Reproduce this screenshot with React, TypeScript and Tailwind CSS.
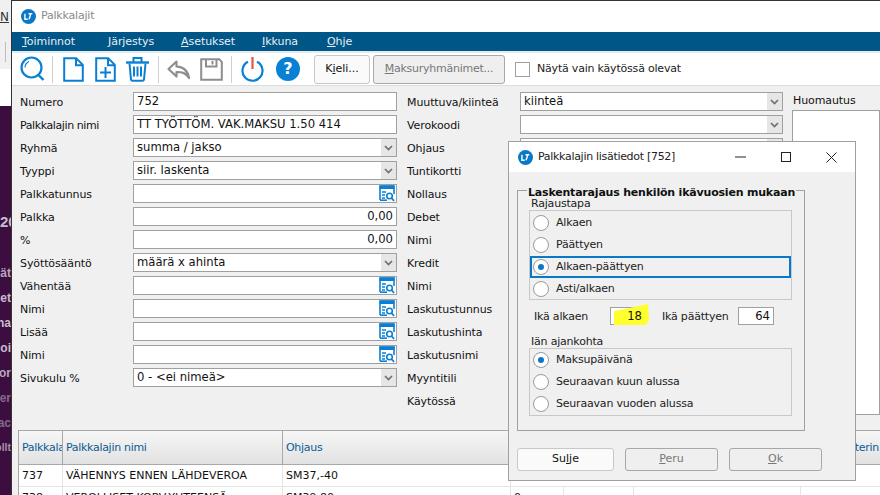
import React from "react";

const font = { fontFamily: '"DejaVu Sans", sans-serif' };

function Logo({ size = 15 }: { size?: number }) {
  return (
    <svg width={size} height={size} viewBox="0 0 16 16" className="shrink-0">
      <circle cx="8" cy="8" r="8" fill="#0a78c8" />
      <path d="M4.2 5v6h3M8 5h4M10 5v1.5L8.6 11" stroke="#fff" strokeWidth="1.5" fill="none" />
    </svg>
  );
}

function Lookup() {
  return (
    <svg width="16" height="17" viewBox="0 0 16 17" className="shrink-0">
      <path d="M1 15V1h14v8" fill="#fff" stroke="#0a80d4" strokeWidth="1.6" />
      <path d="M1 15.2h7" stroke="#0a80d4" strokeWidth="1.6" />
      <rect x="0.5" y="0.5" width="15" height="3.5" fill="#0a80d4" />
      <path d="M3 7h4M3 10h3M3 13h3" stroke="#0a80d4" strokeWidth="1.4" />
      <circle cx="10.5" cy="11" r="2.8" fill="none" stroke="#0a80d4" strokeWidth="1.6" />
      <path d="M12.5 13l2.6 3" stroke="#0a80d4" strokeWidth="1.8" />
    </svg>
  );
}

function Chevron() {
  return (
    <span className="flex h-full w-[15px] shrink-0 items-center justify-center bg-[#e6e6e6]">
      <svg width="9" height="6" viewBox="0 0 9 6">
        <path d="M1 1l3.5 3.5L8 1" fill="none" stroke="#707070" strokeWidth="1.7" />
      </svg>
    </span>
  );
}

type Kind = "text" | "select" | "lookup" | "num";

function Field({ label, value = "", kind = "text", tight = false }: { label: string; value?: string; kind?: Kind; tight?: boolean }) {
  return (
    <div className="mb-[4px] flex h-[19px] items-center">
      <span className={`w-[113px] shrink-0 whitespace-nowrap pt-[3px] text-[11px] text-[#111] ${tight ? "tracking-[-0.4px]" : "tracking-[-0.1px]"}`}>
        {label}
      </span>
      <div className="flex h-[19px] flex-1 items-center border border-[#a0a0a0] bg-white">
        <span className={`flex-1 whitespace-nowrap px-[3px] pt-[1px] text-[11.6px] text-[#111] ${kind === "num" ? "text-right" : ""}`}>{value}</span>
        {kind === "select" && <Chevron />}
        {kind === "lookup" && (
          <span className="mr-[1px]">
            <Lookup />
          </span>
        )}
      </div>
    </div>
  );
}

function PlainLabel({ label }: { label: string }) {
  return (
    <div className="mb-[4px] flex h-[19px] items-center whitespace-nowrap pt-[3px] text-[11px] tracking-[-0.1px] text-[#111]">{label}</div>
  );
}

function Radio({ label, on = false, focus = false }: { label: string; on?: boolean; focus?: boolean }) {
  return (
    <div className={`flex h-[22px] items-center pl-[1px] ${focus ? "border-2 border-[#0a78c8]" : "border-2 border-transparent"}`}>
      <span className="flex h-[16px] w-[16px] shrink-0 items-center justify-center rounded-full border border-[#9a9a9a] bg-white">
        {on && <span className="h-[6px] w-[6px] rounded-full bg-[#0a78c8]" />}
      </span>
      <span className="ml-[7px] whitespace-nowrap pt-[1px] text-[11px] tracking-[-0.2px] text-[#222]">{label}</span>
    </div>
  );
}

function Sep() {
  return <span className="block h-[27px] w-[1px] shrink-0 bg-[#cfcfcf]" />;
}

function Toolbar() {
  const blue = "#0a80d4";
  const gray = "#8e8e8e";
  return (
    <div className="flex h-[33px] shrink-0 items-center border-b border-[#dcdcdc] bg-white pl-[8px]">
      <svg width="25" height="27" viewBox="0 0 25 27" className="shrink-0">
        <circle cx="11.5" cy="11.5" r="10" fill="none" stroke={blue} strokeWidth="2.2" />
        <path d="M5 11.5a7 7 0 0 1 4-6" fill="none" stroke={blue} strokeWidth="1.2" />
        <path d="M18.5 19l5 5" stroke={blue} strokeWidth="2.4" />
      </svg>
      <span className="ml-[7px]"><Sep /></span>
      <svg width="21" height="25" viewBox="0 0 21 25" className="ml-[10px] shrink-0">
        <path d="M1.2 1.2h12l6.6 6.6v16H1.2zM13 1.2v7h6.8" fill="none" stroke={blue} strokeWidth="2" />
      </svg>
      <svg width="21" height="25" viewBox="0 0 21 25" className="ml-[11px] shrink-0">
        <path d="M1.2 1.2h12l6.6 6.6v16H1.2zM13 1.2v7h6.8" fill="none" stroke={blue} strokeWidth="2" />
        <path d="M10.5 10v11M5 15.5h11" stroke={blue} strokeWidth="2" />
      </svg>
      <svg width="25" height="26" viewBox="0 0 25 26" className="ml-[9px] shrink-0">
        <path d="M1 6.5h23" stroke={blue} strokeWidth="2.4" />
        <path d="M8.5 6V2h8v4" fill="none" stroke={blue} strokeWidth="2" />
        <path d="M4.5 7.5l1.5 16a1.5 1.5 0 0 0 1.5 1.2h10a1.5 1.5 0 0 0 1.5-1.2l1.5-16" fill="none" stroke={blue} strokeWidth="2" />
        <path d="M9 10.5v10M12.5 10.5v10M16 10.5v10" stroke={blue} strokeWidth="2" />
      </svg>
      <span className="ml-[8px]"><Sep /></span>
      <svg width="25" height="21" viewBox="0 0 25 21" className="ml-[7px] shrink-0">
        <path d="M10.5 2.5L2.5 10l8 7.5V13c6 0 9.5 1 12.5 6-1-7-5-11-12.5-11.5z" fill="none" stroke={gray} strokeWidth="2.2" strokeLinejoin="round" />
      </svg>
      <svg width="23" height="23" viewBox="0 0 23 23" className="ml-[9px] shrink-0">
        <path d="M1.2 1.2h18l2.6 2.6v18H1.2z" fill="none" stroke={gray} strokeWidth="2" />
        <path d="M6 1.5v7h10.5v-7M12.5 3v3.5" fill="none" stroke={gray} strokeWidth="2" />
      </svg>
      <span className="ml-[8px]"><Sep /></span>
      <svg width="23" height="25" viewBox="0 0 23 25" className="ml-[9px] shrink-0">
        <path d="M7 4.8a10 10 0 1 0 9 0" fill="none" stroke={blue} strokeWidth="2.2" />
        <path d="M11.5 0v12" stroke="#e2574c" strokeWidth="2.2" />
      </svg>
      <span className="ml-[12px] flex h-[24px] w-[24px] shrink-0 items-center justify-center rounded-full bg-[#0a80d4] text-[16px] font-bold text-white">?</span>
      <button className="ml-[14px] flex h-[29px] w-[56px] shrink-0 items-center justify-center rounded-[3px] border border-[#c8c8c8] bg-[#fafafa] text-[11px] text-[#111]">
        <span>K<u>i</u>eli...</span>
      </button>
      <button className="ml-[3px] flex h-[29px] w-[132px] shrink-0 items-center justify-center rounded-[3px] border border-[#a8a8a8] bg-[#efefef] text-[11px] tracking-[-0.25px] text-[#777]">
        <span><u>M</u>aksuryhmänimet...</span>
      </button>
      <span className="ml-[10px] h-[15px] w-[15px] shrink-0 border border-[#a0a0a0] bg-white" />
      <span className="ml-[7px] whitespace-nowrap text-[11px] tracking-[-0.2px] text-[#222]">Näytä vain käytössä olevat</span>
    </div>
  );
}

function Dialog() {
  return (
    <div className="absolute left-[508px] top-[141px] flex h-[340px] w-[348px] flex-col border border-[#a0a0a0] bg-[#f0f0f0]">
      <div className="flex h-[30px] shrink-0 items-center bg-white pl-[9px]">
        <Logo />
        <span className="ml-[5px] flex-1 whitespace-nowrap pt-[1px] text-[11px] tracking-[-0.3px] text-[#222]">Palkkalajin lisätiedot [752]</span>
        <svg width="11" height="2" viewBox="0 0 11 2" className="mr-[35px]"><path d="M0 1h11" stroke="#222" /></svg>
        <svg width="10" height="10" viewBox="0 0 10 10" className="mr-[35px]"><rect x="0.5" y="0.5" width="9" height="9" fill="none" stroke="#222" /></svg>
        <svg width="11" height="11" viewBox="0 0 11 11" className="mr-[18px]"><path d="M0.5 0.5l10 10M10.5 0.5l-10 10" stroke="#222" /></svg>
      </div>
      <div className="relative mx-[8px] mt-[18px] h-[241px] w-[288px] border border-[#a0a0a0] px-[11px]">
        <span className="absolute left-[9px] top-[-5px] h-[12px] overflow-hidden whitespace-nowrap bg-[#f0f0f0] px-[1px] text-[11px] font-bold leading-[13px] tracking-[-0.2px] text-[#111]">Laskentarajaus henkilön ikävuosien mukaan</span>
        <div className="pt-[7px] text-[11px] leading-[12px] tracking-[-0.2px] text-[#222]">
          <span className="pl-[2px]">Rajaustapa</span>
        </div>
        <div className="h-[90px] w-[263px] border border-[#c8c8c8] pt-[1px]">
          <Radio label="Alkaen" />
          <Radio label="Päättyen" />
          <Radio label="Alkaen-päättyen" on focus />
          <Radio label="Asti/alkaen" />
        </div>
        <div className="mt-[7px] flex h-[18px] items-center pl-[5px]">
          <span className="w-[76px] whitespace-nowrap pt-[2px] text-[11px] tracking-[-0.2px] text-[#222]">Ikä alkaen</span>
          <span className="relative h-[18px] w-[36px] border border-[#a0a0a0] bg-white">
            <svg width="37" height="22" viewBox="0 0 37 22" className="absolute left-[2px] top-[-4px] overflow-visible">
              <polygon points="1,7 12,5 35,0 36,16 33,21 1,21" fill="#ffff2e" />
            </svg>
            <span className="absolute inset-0 px-[3px] text-right text-[11.6px] leading-[16px] text-[#111]">18</span>
          </span>
          <span className="ml-[16px] w-[76px] whitespace-nowrap pt-[2px] text-[11px] tracking-[-0.2px] text-[#222]">Ikä päättyen</span>
          <span className="h-[18px] w-[36px] border border-[#a0a0a0] bg-white px-[3px] text-right text-[11.6px] leading-[16px] text-[#111]">64</span>
        </div>
        <div className="mt-[10px] text-[11px] leading-[13px] tracking-[-0.2px] text-[#222]">
          <span className="pl-[2px]">Iän ajankohta</span>
        </div>
        <div className="h-[68px] w-[263px] border border-[#c8c8c8]">
          <Radio label="Maksupäivänä" on />
          <Radio label="Seuraavan kuun alussa" />
          <Radio label="Seuraavan vuoden alussa" />
        </div>
      </div>
      <div className="ml-[8px] mt-[17px] flex">
        <button className="flex h-[23px] w-[97px] items-center justify-center rounded-[3px] border border-[#c8c8c8] bg-[#fafafa] text-[11px] text-[#111]">
          <span>Su<u>l</u>je</span>
        </button>
        <button className="ml-[11px] flex h-[23px] w-[93px] items-center justify-center rounded-[3px] border border-[#a8a8a8] bg-[#efefef] text-[11px] text-[#777]">
          <span><u>P</u>eru</span>
        </button>
        <button className="ml-[11px] flex h-[23px] w-[93px] items-center justify-center rounded-[3px] border border-[#a8a8a8] bg-[#efefef] text-[11px] text-[#777]">
          <span><u>O</u>k</span>
        </button>
      </div>
    </div>
  );
}

const stripText = [
  { t: "20", cls: "justify-start text-[15px] text-[#cbbccd]" },
  { t: "", cls: "" },
  { t: "ät", cls: "justify-end text-[12px] text-[#b9a6bc]" },
  { t: "det", cls: "justify-end text-[12px] text-[#cbbccd]" },
  { t: "na", cls: "justify-end text-[12px] text-[#cbbccd]" },
  { t: "oi", cls: "justify-end text-[12px] text-[#cbbccd]" },
  { t: "or", cls: "justify-end text-[12px] text-[#b9a6bc]" },
  { t: "er", cls: "justify-end text-[12px] text-[#84688a]" },
  { t: "ac", cls: "justify-end text-[12px] text-[#84688a]" },
  { t: "ollt", cls: "justify-end text-[10.5px] text-[#a58fa9]" },
];

function Cell({ w, children, header }: { w: number; children?: React.ReactNode; header?: boolean }) {
  return (
    <div
      className={`flex shrink-0 items-center overflow-hidden whitespace-nowrap pl-[3px] pt-[1px] text-[11px] ${header ? "border-r border-[#a8a8a8] tracking-[-0.3px] text-[#0b5c94]" : "border-r border-[#e4e4e4] text-[#111]"}`}
      style={{ width: w }}
    >
      {children}
    </div>
  );
}

export default function App() {
  return (
    <div className="flex h-[495px] w-[880px] overflow-hidden bg-white" style={font}>
      <div className="flex w-[11px] shrink-0 flex-col overflow-hidden">
        <div className="h-[69px] shrink-0 overflow-hidden bg-[#f0f0f0] pt-[10px]">
          <div className="text-[12px] leading-[14px] text-[#333] underline">N</div>
          <div className="ml-[5px] mt-[18px] h-[20px] w-[1px] bg-[#bdbdbd]" />
        </div>
        <div className="h-[37px] shrink-0 bg-white" />
        <div className="flex flex-1 flex-col overflow-hidden bg-[#3c0e40] pt-[104px]" style={{ fontFamily: '"Liberation Sans", sans-serif' }}>
          {stripText.map((s, i) => (
            <div key={i} className={`flex h-[25px] w-[11px] shrink-0 items-center overflow-hidden whitespace-nowrap font-bold ${s.cls}`}>
              {s.t}
            </div>
          ))}
        </div>
      </div>

      <div className="flex min-w-0 flex-1 flex-col border-l border-t border-[#333] bg-[#f0f0f0]">
        <div className="flex h-[31px] shrink-0 items-center bg-white pl-[9px]">
          <Logo />
          <span className="ml-[5px] text-[11px] tracking-[-0.2px] text-[#8a8a8a]">Palkkalajit</span>
        </div>
        <div className="flex h-[19px] shrink-0 items-center bg-[#005687] pl-[10px] pt-[1px] text-[11px] tracking-[-0.05px] text-[#e8eef3]">
          <span className="w-[86px]"><u>T</u>oiminnot</span>
          <span className="w-[73px]"><u>J</u>ärjestys</span>
          <span className="w-[81px]"><u>A</u>setukset</span>
          <span className="w-[65px]"><u>I</u>kkuna</span>
          <span><u>O</u>hje</span>
        </div>
        <div className="h-[2px] shrink-0 bg-[#e4ebf0]" />
        <Toolbar />

        <div className="flex shrink-0 pl-[8px] pt-[6px]">
          <div className="w-[377px] shrink-0">
            <Field label="Numero" value="752" />
            <Field label="Palkkalajin nimi" value="TT TYÖTTÖM. VAK.MAKSU 1.50 414" tight />
            <Field label="Ryhmä" value="summa / jakso" kind="select" />
            <Field label="Tyyppi" value="siir. laskenta" kind="select" />
            <Field label="Palkkatunnus" kind="lookup" />
            <Field label="Palkka" value="0,00" kind="num" />
            <Field label="%" value="0,00" kind="num" />
            <Field label="Syöttösääntö" value="määrä x ahinta" kind="select" />
            <Field label="Vähentää" kind="lookup" />
            <Field label="Nimi" kind="lookup" />
            <Field label="Lisää" kind="lookup" />
            <Field label="Nimi" kind="lookup" />
            <Field label="Sivukulu %" value="0 - <ei nimeä>" kind="select" />
          </div>
          <div className="ml-[10px] w-[376px] shrink-0">
            <Field label="Muuttuva/kiinteä" value="kiinteä" kind="select" />
            <Field label="Verokoodi" kind="select" />
            <Field label="Ohjaus" kind="select" />
            {["Tuntikortti", "Nollaus", "Debet", "Nimi", "Kredit", "Nimi", "Laskutustunnus", "Laskutushinta", "Laskutusnimi", "Myyntitili", "Käytössä"].map((l, i) => (
              <PlainLabel key={i} label={l} />
            ))}
          </div>
          <div className="ml-[9px] flex-1">
            <div className="h-[18px] whitespace-nowrap pl-[1px] text-[11px] leading-[18px] tracking-[-0.1px] text-[#111]">Huomautus</div>
            <div className="h-[305px] border border-[#a0a0a0] bg-white" />
          </div>
        </div>

        <div className="ml-[6px] mt-[15px] flex min-h-0 flex-1 flex-col border-l border-t border-[#a8a8a8] bg-white">
          <div className="flex h-[34px] shrink-0 border-b border-[#a8a8a8] bg-gradient-to-b from-[#f6f6f6] to-[#e2e2e2]">
            <Cell w={44} header>Palkkala</Cell>
            <Cell w={220} header>Palkkalajin nimi</Cell>
            <Cell w={598} header>
              <span className="flex w-full justify-between pr-[1px]"><span>Ohjaus</span><span>terin</span></span>
            </Cell>
          </div>
          <div className="flex h-[22px] shrink-0 border-b border-[#e4e4e4]">
            <Cell w={44}>737</Cell>
            <Cell w={220}>VÄHENNYS ENNEN LÄHDEVEROA</Cell>
            <Cell w={228}>SM37,-40</Cell>
          </div>
          <div className="flex h-[22px] shrink-0">
            <Cell w={44}>738</Cell>
            <Cell w={220}>VEROLLISET KORV.YHTEENSÄ</Cell>
            <Cell w={228}>SM39,80</Cell>
            <Cell w={53}>0</Cell>
            <Cell w={70} />
            <Cell w={167} />
          </div>
        </div>
      </div>

      <Dialog />
    </div>
  );
}
